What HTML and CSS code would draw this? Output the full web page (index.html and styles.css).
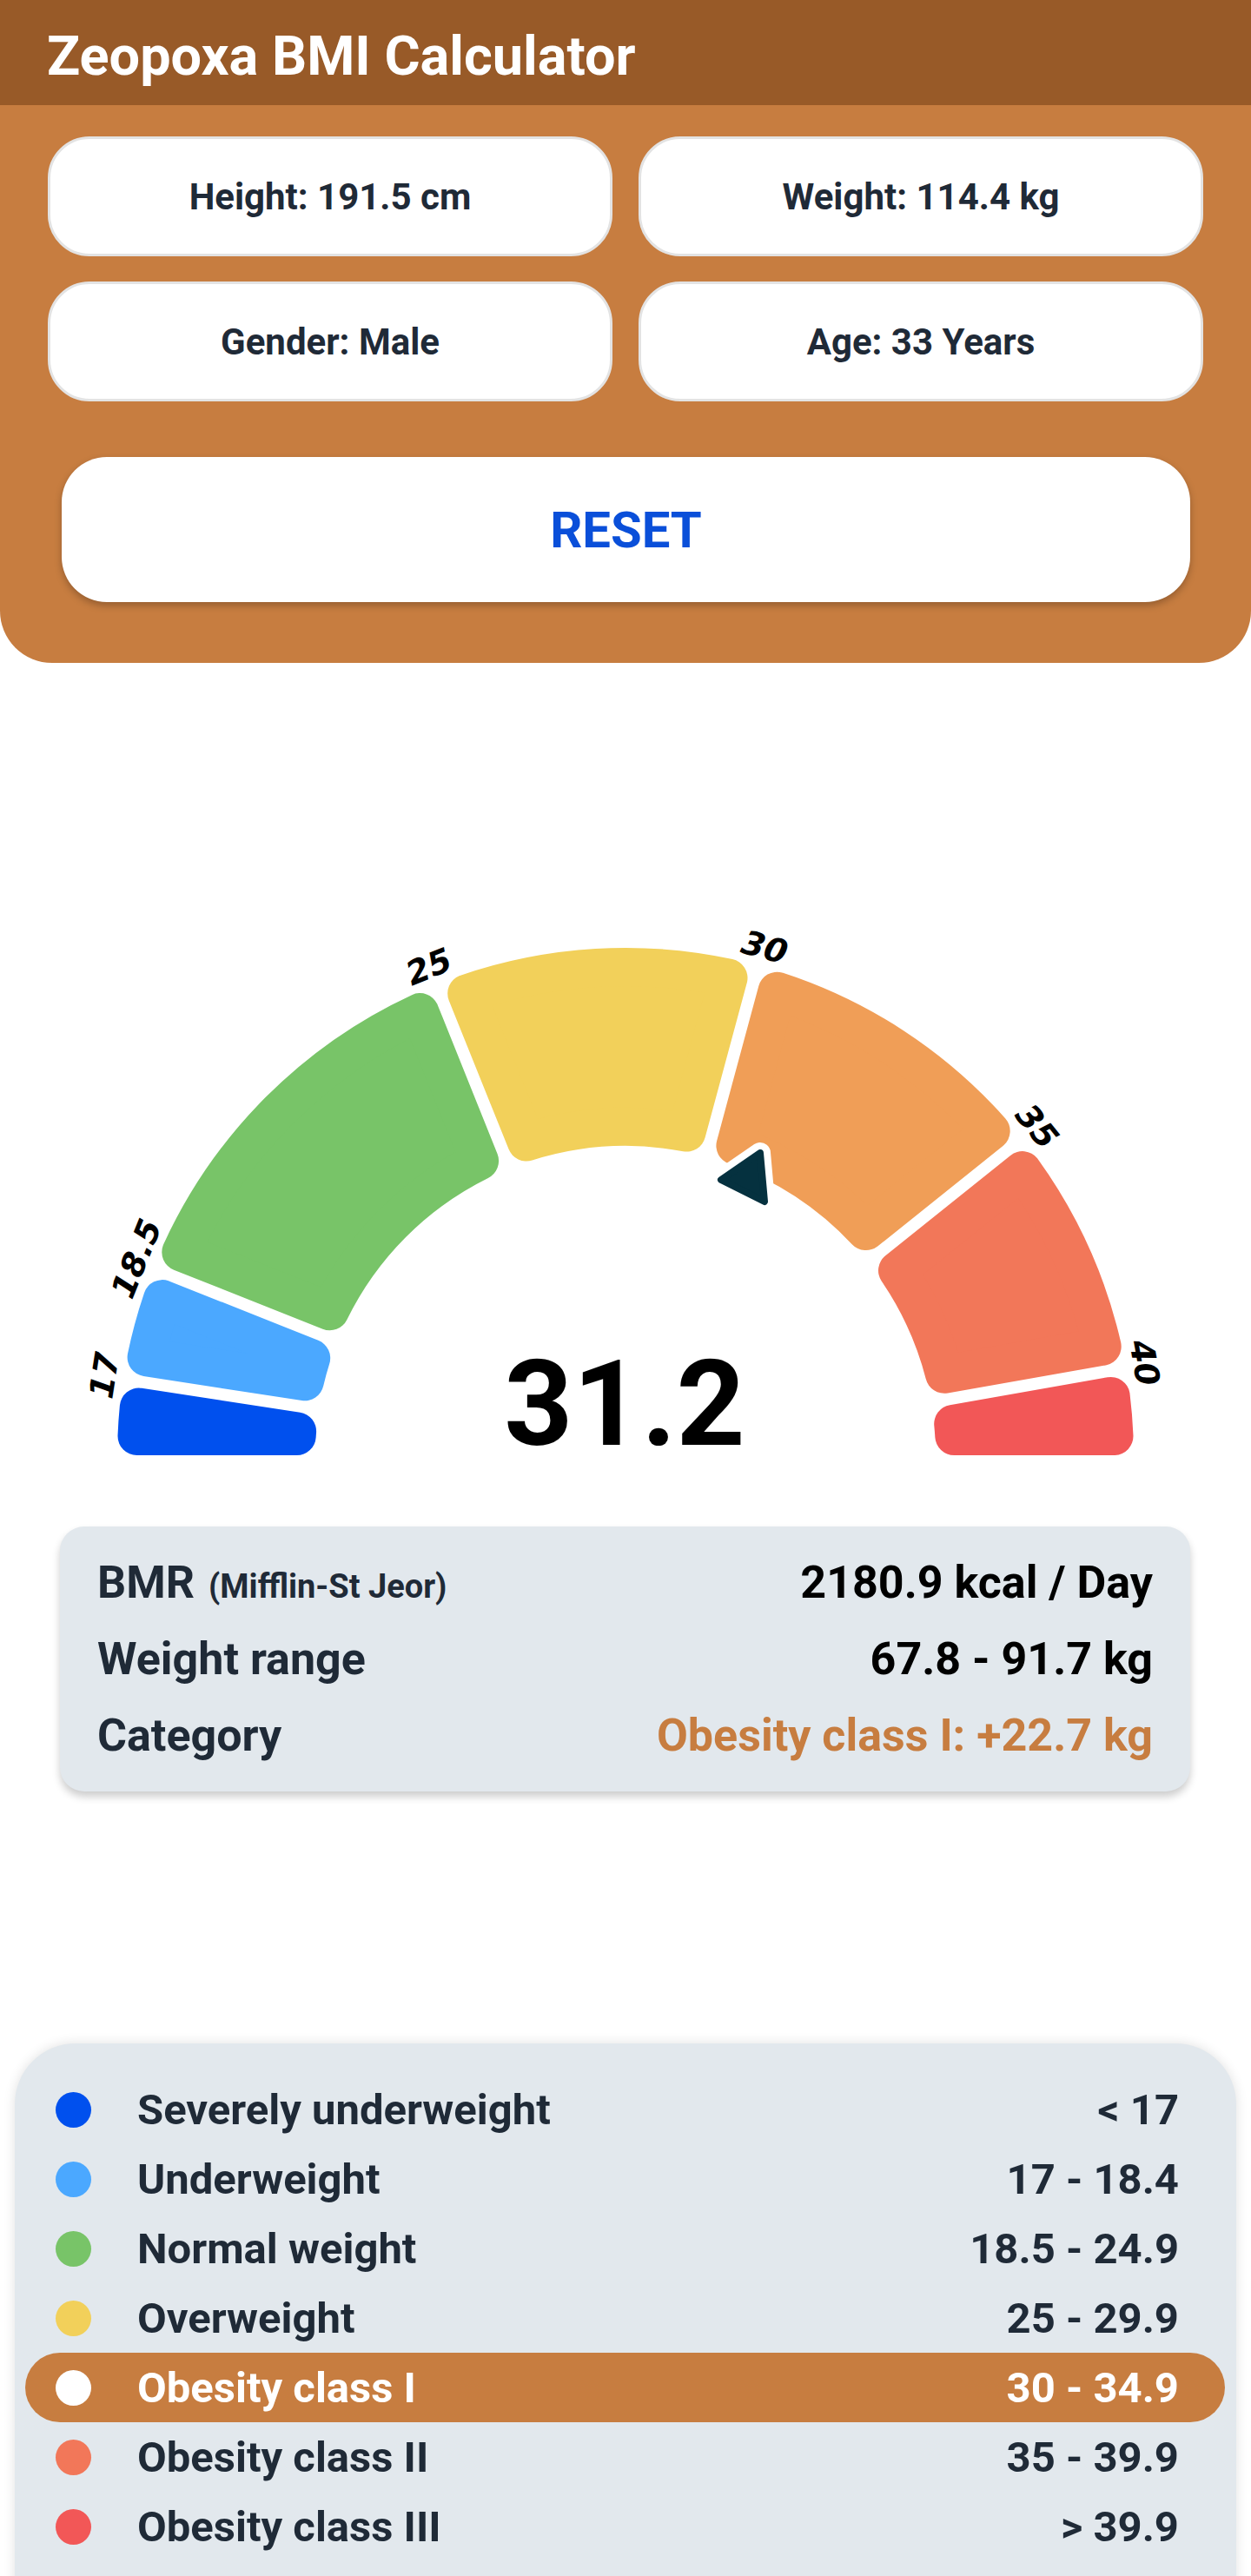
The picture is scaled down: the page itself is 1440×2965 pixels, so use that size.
FILE: index.html
```html
<!DOCTYPE html>
<html lang="en">
<head>
    <meta charset="UTF-8">
    <meta name="viewport" content="width=device-width, initial-scale=1.0">
    <title>Zeopoxa BMI Calculator</title>
    <link rel="stylesheet" href="styles.css">
</head>
<body>
    <header class="topbar">
        <h1>Zeopoxa BMI Calculator</h1>
    </header>

    <section class="panel">
        <div class="fields">
            <div class="field">Height: 191.5 cm</div>
            <div class="field">Weight: 114.4 kg</div>
            <div class="field">Gender: Male</div>
            <div class="field">Age: 33 Years</div>
        </div>
        <button class="reset">RESET</button>
    </section>

    <section class="gauge">
        <svg id="gauge" viewBox="0 0 1440 994" width="1440" height="994">
            <g id="segments"></g>
            <g id="ticks"></g>
            <polygon class="needle-edge" points="875,564 830,595 880,620"/>
            <polygon class="needle" points="875,564 830,595 880,620"/>
            <text class="bmi-value" x="719" y="900">31.2</text>
        </svg>
    </section>

    <section class="summary">
        <div class="summary-row">
            <span>BMR<span class="method">(Mifflin-St Jeor)</span></span>
            <span class="value">2180.9 kcal / Day</span>
        </div>
        <div class="summary-row">
            <span>Weight range</span>
            <span class="value">67.8 - 91.7 kg</span>
        </div>
        <div class="summary-row">
            <span>Category</span>
            <span class="value alert">Obesity class I: +22.7 kg</span>
        </div>
    </section>

    <section class="legend">
        <div class="legend-row"><span class="dot" style="background:#0050ee"></span>Severely underweight<span class="range">&lt; 17</span></div>
        <div class="legend-row"><span class="dot" style="background:#4ba8ff"></span>Underweight<span class="range">17 - 18.4</span></div>
        <div class="legend-row"><span class="dot" style="background:#78c468"></span>Normal weight<span class="range">18.5 - 24.9</span></div>
        <div class="legend-row"><span class="dot" style="background:#f2d05a"></span>Overweight<span class="range">25 - 29.9</span></div>
        <div class="legend-row active"><span class="dot" style="background:#fff"></span>Obesity class I<span class="range">30 - 34.9</span></div>
        <div class="legend-row"><span class="dot" style="background:#f27759"></span>Obesity class II<span class="range">35 - 39.9</span></div>
        <div class="legend-row"><span class="dot" style="background:#f25757"></span>Obesity class III<span class="range">&gt; 39.9</span></div>
    </section>

    <script src="gauge.js"></script>
</body>
</html>
```

FILE: styles.css
```css
body {
    margin: 0;
    font-family: Roboto, "Noto Sans", sans-serif;
    background: #fff;
    color: #1f2a37;
}
.topbar {
    height: 121px;
    box-sizing: border-box;
    padding: 8px 54px 0;
    background: #985a28;
    display: flex;
    align-items: center;
}
.topbar h1 {
    margin: 0;
    font-size: 63px;
    font-weight: 700;
    line-height: 1.17;
    color: #fff;
}
.panel {
    background: #c77d40;
    padding: 36px 55px 70px;
    border-radius: 0 0 60px 60px;
}
.fields {
    display: grid;
    grid-template-columns: 1fr 1fr;
    gap: 29px 30px;
}
.field {
    height: 138px;
    box-sizing: border-box;
    background: #fff;
    border: 3px solid #e3e3e3;
    border-radius: 48px;
    display: flex;
    align-items: center;
    justify-content: center;
    font-size: 42px;
    font-weight: 700;
    color: #1f2a37;
}
.reset {
    display: block;
    width: calc(100% - 31px);
    height: 167px;
    margin: 64px 15px 0 16px;
    border: none;
    border-radius: 52px;
    background: #fff;
    box-shadow: 0 4px 8px rgba(0, 0, 0, 0.25);
    font-family: Roboto, sans-serif;
    font-size: 58px;
    font-weight: 700;
    color: #0a4fd9;
    cursor: pointer;
}
.gauge {
    height: 994px;
}
.gauge svg {
    display: block;
}
.tick {
    font-family: "DejaVu Sans", sans-serif;
    font-weight: 700;
    font-size: 38px;
    font-style: oblique;
    fill: #000;
}
.needle-edge {
    fill: #fff;
    stroke: #fff;
    stroke-width: 24;
    stroke-linejoin: round;
}
.needle {
    fill: #05313f;
    stroke: #05313f;
    stroke-width: 8;
    stroke-linejoin: round;
}
.bmi-value {
    font-family: Roboto, sans-serif;
    font-weight: 700;
    font-size: 138px;
    text-anchor: middle;
    fill: #000;
}
.summary {
    margin: 0 70px 0 69px;
    padding: 21px 43px 20px;
    background: #e2e8ed;
    border-radius: 28px;
    box-shadow: 0 6px 10px rgba(0, 0, 0, 0.2);
}
.summary-row {
    display: flex;
    justify-content: space-between;
    align-items: baseline;
    height: 88px;
    line-height: 88px;
    font-size: 52px;
    font-weight: 700;
}
.summary-row .value {
    color: #000;
}
.summary-row .alert {
    color: #c77d40;
}
.method {
    margin-left: 16px;
    font-size: 38px;
}
.legend {
    margin: 290px 17px 0;
    padding: 36px 13px 30px 12px;
    background: #e2e8ed;
    border-radius: 70px 70px 0 0;
    box-shadow: 0 0 14px rgba(0, 0, 0, 0.12);
}
.legend-row {
    display: flex;
    align-items: center;
    height: 80px;
    padding: 0 53px 0 35px;
    border-radius: 40px;
    font-size: 49px;
    font-weight: 700;
}
.legend-row.active {
    background: #c77d40;
    color: #fff;
}
.dot {
    flex: none;
    width: 41px;
    height: 41px;
    margin-right: 53px;
    border-radius: 50%;
}
.range {
    margin-left: auto;
}
```

FILE: gauge.js
```js
// half-donut gauge: angles are measured from the left end, over the top
const cx = 720, cy = 913;
const rOut = 585, rIn = 357;
const corner = 22, halfGap = 7;

const bands = [
    { from: 0, to: 8.7, color: '#0050ee' },
    { from: 8.7, to: 21.7, color: '#4ba8ff' },
    { from: 21.7, to: 68.1, color: '#78c468' },
    { from: 68.1, to: 105.1, color: '#f2d05a' },
    { from: 105.1, to: 141.3, color: '#f09e57' },
    { from: 141.3, to: 170, color: '#f27759' },
    { from: 170, to: 180, color: '#f25757' }
];
const ticks = [['17', 8.8], ['18.5', 22], ['25', 68.1], ['30', 105.3], ['35', 141.3], ['40', 169.8]];

const NS = 'http://www.w3.org/2000/svg';

function point(r, deg) {
    const a = deg * Math.PI / 180;
    return (cx - r * Math.cos(a)).toFixed(1) + ' ' + (cy - r * Math.sin(a)).toFixed(1);
}
function offset(d, r) {
    return Math.asin(d / r) * 180 / Math.PI;
}

const segments = document.getElementById('segments');
bands.forEach(band => {
    const e1 = band.from === 0 ? corner + 1 : corner + halfGap;
    const e2 = band.to === 180 ? corner + 1 : corner + halfGap;
    const ro = rOut - corner, ri = rIn + corner;
    const a = point(ri, band.from + offset(e1, ri));
    const b = point(ro, band.from + offset(e1, ro));
    const c = point(ro, band.to - offset(e2, ro));
    const d = point(ri, band.to - offset(e2, ri));
    const path = document.createElementNS(NS, 'path');
    path.setAttribute('d', `M${a} L${b} A${ro} ${ro} 0 0 1 ${c} L${d} A${ri} ${ri} 0 0 0 ${a} Z`);
    path.setAttribute('fill', band.color);
    path.setAttribute('stroke', band.color);
    path.setAttribute('stroke-width', corner * 2);
    path.setAttribute('stroke-linejoin', 'round');
    segments.appendChild(path);
});

const tickGroup = document.getElementById('ticks');
ticks.forEach(([label, deg]) => {
    const a = deg * Math.PI / 180;
    const x = cx - 607 * Math.cos(a);
    const y = cy - 607 * Math.sin(a);
    const text = document.createElementNS(NS, 'text');
    text.setAttribute('class', 'tick');
    text.setAttribute('x', x.toFixed(1));
    text.setAttribute('y', y.toFixed(1));
    text.setAttribute('text-anchor', 'middle');
    text.setAttribute('dominant-baseline', 'central');
    text.setAttribute('transform', `rotate(${(deg - 90).toFixed(1)} ${x.toFixed(1)} ${y.toFixed(1)})`);
    text.textContent = label;
    tickGroup.appendChild(text);
});
```
